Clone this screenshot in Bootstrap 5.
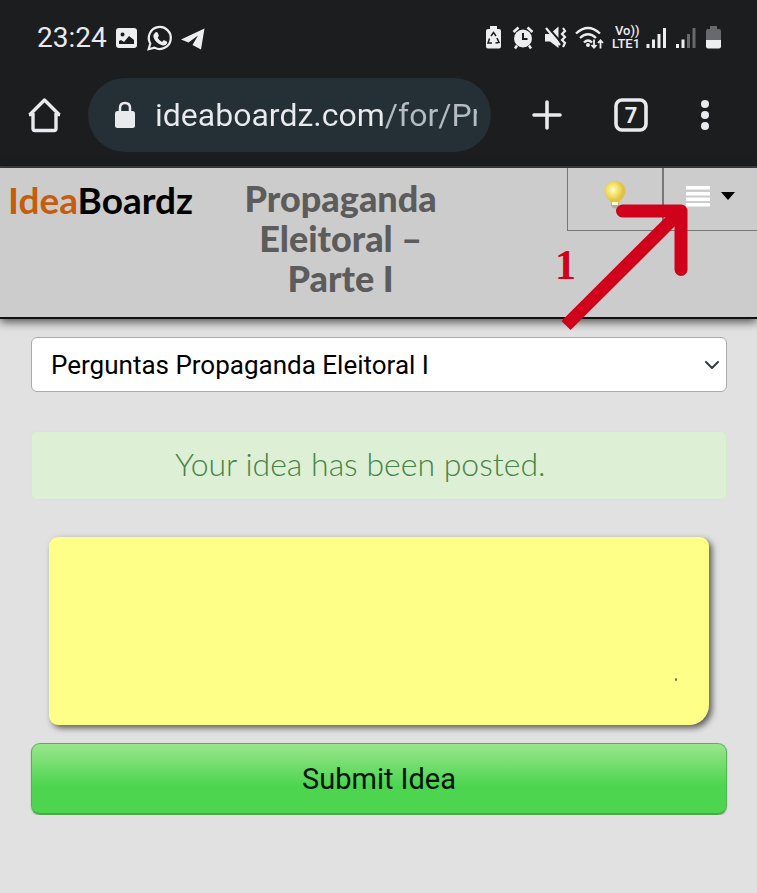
<!DOCTYPE html>
<html lang="pt-BR">
<head>
<meta charset="utf-8">
<meta name="viewport" content="width=device-width, initial-scale=1">
<title>IdeaBoardz</title>
<link rel="stylesheet" href="https://cdn.jsdelivr.net/npm/bootstrap@5.3.0/dist/css/bootstrap.min.css">
<style>
  body { background: #e1e1e1; font-family: Roboto, sans-serif; color: #000; }
  svg { display: block; flex: none; }
  .phone-chrome { background: #1c1d1f; color: #e8eaed; border-bottom: 2px solid #3c4145; }
  .status-strip { height: 76px; padding: 0 35px 0 37px; }
  .clock { font-size: 28px; line-height: 32px; margin-right: 7px; }
  .browser-bar { padding: 2px 47px 14px 28px; }
  .tool { background: none; border: 0; padding: 0; color: #e8eaed; }
  .address { background: #252f36; border-radius: 37px; height: 74px; padding: 0 14px 0 26px; margin: 0 41px 0 27px; gap: 19px; min-width: 0; }
  .address input { border: 0; outline: 0; padding: 0; font-size: 32px; line-height: 40px; width: 0;
    background: linear-gradient(90deg, #e8eaed 230px, #b4bbc1 230px); -webkit-background-clip: text; background-clip: text;
    -webkit-text-fill-color: transparent; }
  .site-header { display: grid; grid-template-columns: 30% 30% 15% 25%; background: #ccc; height: 151px;
    border-bottom: 2px solid #111; box-shadow: 0 3px 9px rgba(0,0,0,.65); }
  .logo { font: 700 37px/40px Lato, sans-serif; color: #000; padding: 12px 0 0 8px; }
  .logo span { color: #c65d0c; }
  .board-title { font: 900 36px/40px Lato, sans-serif; color: #5c5c5c; padding-top: 10px; white-space: nowrap; }
  .header-tools { height: 63px; margin-left: -1px; border-left: 1px solid #777; border-bottom: 1px solid #777; }
  .header-tools .tool + .tool { border-left: 2px solid #777; }
  .tool-caret { margin-left: 11px; }
  .pointer { right: 68px; top: 35px; }
  .pointer text { font: 700 42px "Liberation Serif", serif; }
  .board-main { padding: 18px 30px 0 31px; }
  .board-main .form-select { height: 55px; border: 1px solid #aaa; border-radius: 6px; font-size: 26px; line-height: 32px; padding: 0 40px 0 19px; color: #000;
    background-position: right 6px center; background-size: 16px 16px; }
  .board-main .alert { margin: 39px 0 37px; height: 69px; padding: 13px 0 0 143px; border: 1px solid #d6e9c6; border-radius: 6px;
    background: #ddf0d6; color: #478347; font: 300 32px/38px Lato, sans-serif; }
  .note { margin: 0 18px 18px; }
  .note textarea { height: 188px; resize: none; background: #feff86; border: 0; border-radius: 9px 9px 20px 9px;
    box-shadow: 3px 3px 6px rgba(0,0,0,.6); padding: 16px; font-size: 26px; }
  .speck { width: 2px; height: 3px; right: 32px; bottom: 44px; background: #6e6b35; }
  .submit { height: 72px; border: 1px solid #55b554; border-bottom: 2px solid #4aa84c; border-radius: 9px; font-size: 29px; line-height: 36px; color: #06140a;
    background: linear-gradient(#9ae68c, #4dd550 60%, #4dd550); box-shadow: 0 1px 2px rgba(0,0,0,.2); }
</style>
</head>
<body>
<div class="phone-chrome">
  <div class="status-strip d-flex align-items-center justify-content-between">
    <div class="d-flex align-items-center">
      <span class="clock">23:24</span>
      <svg width="92" height="30" viewBox="114 23 92 30" fill="#eceef0">
        <path fill-rule="evenodd" d="M119 28h15q3 0 3 3v14q0 3-3 3h-15q-3 0-3-3V31q0-3 3-3zM119 41v3h15v-4l-5-4-5 6-3-2zM122.500 32.500a2 2 0 1 0 .1 0z"/>
        <path fill="none" stroke="#eceef0" stroke-width="2.200" d="M148.600 49.200l1.700-5.700a11 11 0 1 1 4.200 4.100z"/>
        <path d="M155.200 32.500q1.500-1 2.500.2l1.200 3-1.200 2q1.600 3 4.400 4.200l1.700-1.800 3 1.500q.8.500.2 2-1.500 2.700-5 1.700-6.500-2-8.500-8-.5-3 1.700-4.800z"/>
        <path d="M181 39.500L204.500 28.500 201 49.500 192.500 45 198 35.500 188.500 42.500z"/>
      </svg>
    </div>
    <svg width="238" height="34" viewBox="484 21 238 34" fill="#eceef0">
      <path d="M490 26h7v3h2q2 0 2 2v15.500q0 2-2 2h-11q-2 0-2-2V31q0-2 2-2h2z"/>
      <path fill="none" stroke="#1c1d1f" stroke-width="1.500" d="M491 36l2.500-3.500 2.500 3.500M497 38l2 4.500-3.500.5M492 43h-4l1.500-4.500"/>
      <circle cx="523" cy="38.500" r="9"/>
      <path fill="none" stroke="#eceef0" stroke-width="2.500" d="M513.500 32l5-4.500M532.500 32l-5-4.500M517 45.500l-2 3M529 45.500l2 3"/>
      <path fill="none" stroke="#1c1d1f" stroke-width="2" d="M523 33v6h4.500"/>
      <path d="M545 34h5l8.500-7.500V48L550 41.500h-5z"/>
      <path fill="none" stroke="#1c1d1f" stroke-width="2" d="M547.500 27l16 18"/>
      <path fill="none" stroke="#eceef0" stroke-width="2.200" d="M546 28l14 17M563 28l2 3-3 3 3 3-3 3 3 3-2 4"/>
      <g fill="none" stroke="#eceef0" stroke-width="2.300"><path d="M576 33.500q12-11 24 0M580 38q8-7.500 16 0M584 42.500q4-4 8 0"/><path d="M594 39.500v8M591.500 45l2.500 2.700 2.500-2.700M600.500 48.500v-8M598 43l2.500-2.700 2.500 2.700" stroke-width="1.800"/></g>
      <circle cx="588" cy="45" r="2"/>
      <text x="615" y="35" font-size="13" font-weight="500" font-family="Roboto, sans-serif">Vo))</text>
      <text x="612" y="48" font-size="13" font-weight="500" font-family="Roboto, sans-serif">LTE1</text>
      <path d="M646.500 44h3v4h-3zM652 39.500h3V48h-3zM657.500 34h3v14h-3zM663 28h3v20h-3zM676 44h3v4h-3zM681.500 39.500h3V48h-3z"/>
      <path fill="#67696c" d="M687 34h3v14h-3zM692.500 28h3v20h-3zM710 26h7v3h2q2 0 2 2v9h-15v-9q0-2 2-2h2z"/>
      <path d="M706 40h15v6.500q0 2-2 2h-11q-2 0-2-2z"/>
    </svg>
  </div>
  <div class="browser-bar d-flex align-items-center">
    <button class="tool" type="button" aria-label="Home">
      <svg width="33" height="36" viewBox="0 0 33 36" fill="none" stroke="#e8eaed" stroke-width="3.400"><path d="M1.500 18L16.500 3l15 15M5 16v15.500q0 2 2 2h19q2 0 2-2V16M1 17.500h4M28 17.500h4" stroke-linejoin="round"/></svg>
    </button>
    <div class="address d-flex align-items-center flex-grow-1">
      <svg width="22" height="28" viewBox="0 0 22 28"><rect x="1" y="10" width="20" height="17" rx="2.500" fill="#e8eaed"/><path d="M6 11V7q0-5 5-5t5 5v4" fill="none" stroke="#e8eaed" stroke-width="2.500"/></svg>
      <input class="flex-grow-1" type="text" aria-label="Address" value="ideaboardz.com/for/Pr">
    </div>
    <button class="tool" type="button" aria-label="New tab">
      <svg width="30" height="30" viewBox="0 0 30 30" stroke="#e8eaed" stroke-width="3.600" stroke-linecap="round"><path d="M15 2v26M2 15h26"/></svg>
    </button>
    <button class="tool ms-5" type="button" aria-label="Tabs">
      <svg class="ms-1" width="34" height="34" viewBox="0 0 34 34"><rect x="2" y="2" width="30" height="30" rx="6" fill="none" stroke="#e8eaed" stroke-width="3.600"/><text x="17" y="24.500" text-anchor="middle" font-size="22" font-weight="700" font-family="Roboto, sans-serif" fill="#e8eaed">7</text></svg>
    </button>
    <button class="tool ms-5" type="button" aria-label="Menu">
      <svg class="ms-1" width="10" height="32" viewBox="0 0 10 32" fill="#e8eaed"><circle cx="5" cy="5" r="4"/><circle cx="5" cy="16" r="4"/><circle cx="5" cy="27" r="4"/></svg>
    </button>
  </div>
</div>

<header class="site-header position-relative">
  <a class="logo text-decoration-none" href="#"><span>Idea</span>Boardz</a>
  <h1 class="board-title text-center m-0">Propaganda<br>Eleitoral –<br>Parte I</h1>
  <div></div>
  <div class="header-tools d-flex">
    <button class="tool w-50 d-flex justify-content-center pt-2" type="button" aria-label="Ideas">
      <svg class="mt-1" width="26" height="32" viewBox="0 0 26 32"><defs><radialGradient id="glow" cx=".4" cy=".4"><stop offset="0" stop-color="#fffbd0"/><stop offset=".5" stop-color="#f5e36a"/><stop offset="1" stop-color="#dfc04b"/></radialGradient></defs><path d="M9 20h8v6q-4 5-8 0z" fill="#a9b0a0"/><path d="M13 1c6 0 10.500 4.500 10.500 10 0 4-2 6-4 8.500L17 23H9l-2.500-3.500C4.500 17 2.500 15 2.500 11 2.500 5.500 7 1 13 1z" fill="url(#glow)"/><path d="M10 22h6v3h-6z" fill="#fffbd0"/></svg>
    </button>
    <button class="tool w-50 d-flex justify-content-center pt-3" type="button" aria-label="Board menu">
      <svg width="24" height="24" viewBox="0 0 24 24" fill="#fff"><path d="M0 2h24v3.500H0zM0 8h24v3.500H0zM0 13.500h24V17H0zM0 19h24v3.500H0z"/></svg>
      <svg class="tool-caret mt-2" width="14" height="8" viewBox="0 0 14 8"><path d="M0 0h14L7 8z"/></svg>
    </button>
  </div>
  <svg class="pointer position-absolute" width="134" height="130" viewBox="555 203 134 130" role="img" aria-label="1">
    <path d="M566 325.500L681 211" stroke="#d0021b" stroke-width="13"/>
    <path d="M622.500 211H681v58.500" fill="none" stroke="#d0021b" stroke-width="13" stroke-linecap="round" stroke-linejoin="round"/>
    <text x="555" y="279" fill="#d0021b">1</text>
  </svg>
</header>

<main class="board-main">
  <form>
    <select class="form-select" aria-label="Section"><option>Perguntas Propaganda Eleitoral I</option></select>
    <div class="alert" role="status">Your idea has been posted.</div>
    <div class="note position-relative">
      <textarea class="form-control" aria-label="Idea"></textarea>
      <span class="speck position-absolute rounded-circle"></span>
    </div>
    <button class="submit w-100" type="submit">Submit Idea</button>
  </form>
</main>
<script src="https://cdn.jsdelivr.net/npm/bootstrap@5.3.0/dist/js/bootstrap.bundle.min.js"></script>
</body>
</html>
